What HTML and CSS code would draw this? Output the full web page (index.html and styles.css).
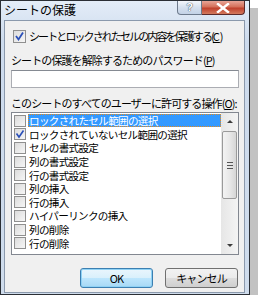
FILE: index.html
```html
<!DOCTYPE html>
<html>
<head>
    <title>シートの保護</title>
    <link rel="stylesheet" href="styles.css">
</head>
<body>
    <div class="window">
        <div class="titlebar">
            <span class="title">シートの保護</span>
            <div class="caption">
                <span class="cap-help">?</span>
                <span class="cap-close">
                    <svg width="14" height="10" viewBox="0 0 14 10"><path d="M2 1 L12 9 M12 1 L2 9" stroke="#fff" stroke-width="2.4" stroke-linecap="square"/></svg>
                </span>
            </div>
        </div>
        <div class="client">
            <div class="check-row main">
                <span class="box checked">
                    <svg width="11" height="11" viewBox="0 0 11 11"><path d="M2 5 L4.5 8.5 L9 1.5" stroke="#2a4fb8" stroke-width="1.8" fill="none"/></svg>
                </span>
                <span class="main-text">シートとロックされたセルの内容を保護する(<u>C</u>)</span>
            </div>
            <div class="label">シートの保護を解除するためのパスワード(<u>P</u>)</div>
            <div class="input"></div>
            <div class="label second">このシートのすべてのユーザーに許可する操作(<u>O</u>):</div>
            <div class="listbox">
                <ul class="items">
                    <li class="selected"><span class="box"></span><span class="text">ロックされたセル範囲の選択</span></li>
                    <li><span class="box checked"><svg width="10" height="10" viewBox="0 0 10 10"><path d="M1.5 4.5 L4 8 L8.5 1.5" stroke="#2a4fb8" stroke-width="1.6" fill="none"/></svg></span><span class="text">ロックされていないセル範囲の選択</span></li>
                    <li><span class="box"></span><span class="text">セルの書式設定</span></li>
                    <li><span class="box"></span><span class="text">列の書式設定</span></li>
                    <li><span class="box"></span><span class="text">行の書式設定</span></li>
                    <li><span class="box"></span><span class="text">列の挿入</span></li>
                    <li><span class="box"></span><span class="text">行の挿入</span></li>
                    <li><span class="box"></span><span class="text">ハイパーリンクの挿入</span></li>
                    <li><span class="box"></span><span class="text">列の削除</span></li>
                    <li><span class="box"></span><span class="text">行の削除</span></li>
                </ul>
                <div class="scrollbar">
                    <span class="arrow up"></span>
                    <span class="thumb"><span class="grip"></span></span>
                    <span class="track"></span>
                    <span class="arrow down"></span>
                </div>
            </div>
            <div class="buttons">
                <button class="default">OK</button>
                <button>キャンセル</button>
            </div>
        </div>
    </div>
</body>
</html>
```

FILE: styles.css
```css
body {
    margin: 0;
    background: white;
    font-family: "Noto Sans CJK JP", "Liberation Sans", sans-serif;
}
.window {
    width: 248px;
    height: 293px;
    border: 1px solid #2b2f35;
    background: linear-gradient(to bottom, #e4edf8, #cddbed 40px, #cfdcec);
    box-shadow: 8px 8px 0 #c2c2c2;
    display: flex;
    flex-direction: column;
}
.titlebar {
    height: 19px;
    display: flex;
    justify-content: space-between;
    align-items: flex-start;
}
.title {
    font-size: 12px;
    line-height: 16px;
    padding: 1px 0 0 3px;
    color: #000;
}
.caption {
    display: flex;
    margin-right: 4px;
}
.cap-help {
    width: 23px;
    height: 13px;
    border: 1px solid #6d7a8c;
    border-top: none;
    border-radius: 0 0 0 4px;
    background: linear-gradient(to bottom, #f4f7fb, #d5e0ee 50%, #c3d2e6);
    font-family: "Liberation Sans", sans-serif;
    font-weight: bold;
    font-size: 11px;
    line-height: 13px;
    text-align: center;
    color: #fff;
    text-shadow: 0 0 1px #3a4a60, 0 0 1px #3a4a60;
}
.cap-close {
    width: 42px;
    height: 13px;
    border: 1px solid #5c2a2a;
    border-top: none;
    border-left: none;
    border-radius: 0 0 4px 0;
    background: linear-gradient(to bottom, #e8a597, #d4705a 45%, #c0412d 55%, #d37a5e);
    display: flex;
    align-items: center;
    justify-content: center;
}
.client {
    margin: 0 4px 0 3px;
    height: 271px;
    border: 1px solid #8b99ac;
    background: #f0f0f0;
    padding: 0 5px 0 6px;
    font-size: 11px;
    letter-spacing: -0.9px;
    color: #000;
}
.check-row {
    display: flex;
    align-items: center;
    height: 14px;
    white-space: nowrap;
}
.main {
    margin-top: 8px;
    padding-left: 2px;
}
.main .box {
    margin-right: 3px;
}
.main-text {
    letter-spacing: -1.9px;
}
.main-text u {
    letter-spacing: 0;
}
.box {
    width: 11px;
    height: 11px;
    border: 1px solid #8f8f8f;
    background: linear-gradient(135deg, #dcdcdc, #f6f6f6);
    display: flex;
    align-items: center;
    justify-content: center;
    flex-shrink: 0;
}
u {
    text-decoration: underline;
}
.label {
    margin-top: 10px;
    height: 14px;
    line-height: 14px;
    white-space: nowrap;
}
.input {
    margin-top: 3px;
    height: 16px;
    border: 1px solid #abadb3;
    border-top-color: #858a92;
    background: white;
}
.label.second {
    margin-top: 8px;
}
.listbox {
    margin-top: 2px;
    height: 141px;
    border: 1px solid #828790;
    background: white;
    display: flex;
    overflow: hidden;
}
.items {
    list-style: none;
    margin: 0;
    padding: 1px 0 0 2px;
    flex: 1;
    font-size: 10.6px;
}
.items li {
    display: flex;
    align-items: center;
    height: 13.6px;
    white-space: nowrap;
}
.items .box {
    width: 10px;
    height: 10px;
    margin-right: 2px;
}
.items .text {
    line-height: 13px;
    padding-left: 1px;
    flex: 1;
    letter-spacing: -0.7px;
}
.items .selected .text {
    background: #3399ff;
    color: white;
    outline: 1px dotted #e88a1a;
    outline-offset: -1px;
}
.scrollbar {
    width: 17px;
    display: flex;
    flex-direction: column;
    background: linear-gradient(to right, #e6e6e6, #f4f4f4);
}
.arrow {
    height: 17px;
    display: flex;
    align-items: center;
    justify-content: center;
}
.arrow::after {
    content: "";
    border-left: 3px solid transparent;
    border-right: 3px solid transparent;
}
.arrow.up::after {
    border-bottom: 3px solid #3c3c3c;
}
.arrow.down::after {
    border-top: 3px solid #3c3c3c;
}
.thumb {
    height: 66px;
    margin: 1px 1px 0 1px;
    border: 1px solid #9a9a9a;
    border-radius: 2px;
    background: linear-gradient(to right, #f3f3f3, #e8e8e8 50%, #d6d6d6);
    display: flex;
    align-items: center;
    justify-content: center;
}
.grip {
    width: 6px;
    height: 5px;
    border-top: 1px solid #555;
    border-bottom: 1px solid #555;
    background: linear-gradient(to bottom, transparent 2px, #555 2px, #555 3px, transparent 3px);
}
.track {
    flex: 1;
}
.buttons {
    display: flex;
    justify-content: flex-end;
    gap: 12px;
    margin-top: 13px;
    padding-right: 1px;
}
button {
    width: 73px;
    height: 20px;
    border: 1px solid #707070;
    border-radius: 3px;
    background: linear-gradient(to bottom, #f2f2f2, #ebebeb 50%, #dddddd 50%, #cfcfcf);
    font-family: "Noto Sans CJK JP", "Liberation Sans", sans-serif;
    font-size: 11px;
    letter-spacing: -0.9px;
    color: #000;
    padding: 0;
    line-height: 16px;
}
button.default {
    border-color: #3c7fb1;
    box-shadow: inset 0 0 0 1px #8fd2f5;
    background: linear-gradient(to bottom, #eaf6fd, #d9f0fc 50%, #bee6fd 50%, #a7d9f5);
}
```
